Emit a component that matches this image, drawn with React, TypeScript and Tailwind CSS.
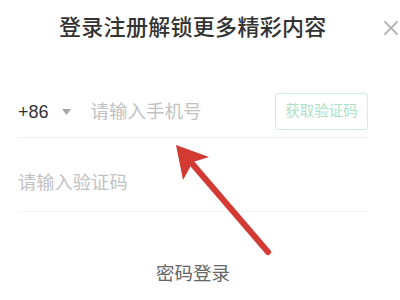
export default function App() {
  return (
    <div
      className="relative h-[300px] w-[400px] overflow-hidden bg-white"
      style={{ fontFamily: '"Liberation Sans", "Noto Sans CJK SC", sans-serif' }}
    >
      <div className="flex h-14 items-center pl-[59px] pr-[2px]">
        <h1 className="text-[22px] font-medium leading-[30px] tracking-[0.3px] text-[#333]">
          登录注册解锁更多精彩内容
        </h1>
        <button type="button" aria-label="关闭" className="ml-auto flex h-[14px] w-[14px] items-center justify-center text-[#b5b5b5]">
          <svg width="14" height="14" viewBox="0 0 14 14" aria-hidden="true">
            <path d="M1 1l12 12M13 1L1 13" stroke="currentColor" strokeWidth="1.8" strokeLinecap="round" />
          </svg>
        </button>
      </div>

      <div className="ml-[18px] mr-[32px] mt-[30px] flex h-[52px] items-center border-b border-[#f1f1f1]">
        <span className="text-[18px] leading-6 text-[#333]">+86</span>
        <svg width="9" height="6" viewBox="0 0 9 6" className="ml-[13px]" aria-hidden="true">
          <path d="M0 0h9L4.5 6z" fill="#a8a8a8" />
        </svg>
        <span className="ml-[20px] text-[18.5px] leading-6 text-[#c2c2c2]">请输入手机号</span>
        <button
          type="button"
          className="ml-auto flex h-[37px] w-[93px] items-center justify-center rounded-[3px] border border-[#cfeedd] text-[14.5px] text-[#acdfc6]"
        >
          获取验证码
        </button>
      </div>

      <div className="ml-[18px] mr-[32px] border-b border-[#f3f3f3] pb-[18px] pt-[35px]">
        <span className="block text-[18.3px] leading-5 text-[#c2c2c2]">请输入验证码</span>
      </div>

      <div className="mt-[50px] flex justify-center pr-[14px]">
        <span className="text-[18.5px] leading-6 text-[#666]">密码登录</span>
      </div>

      <svg
        className="pointer-events-none absolute inset-0"
        width="400"
        height="300"
        viewBox="0 0 400 300"
        aria-hidden="true"
      >
        <line x1="189" y1="160" x2="268" y2="252" stroke="#d23a33" strokeWidth="6" strokeLinecap="round" />
        <path d="M176 145L209 157L193 162L183 180Z" fill="#d23a33" />
      </svg>
    </div>
  )
}
